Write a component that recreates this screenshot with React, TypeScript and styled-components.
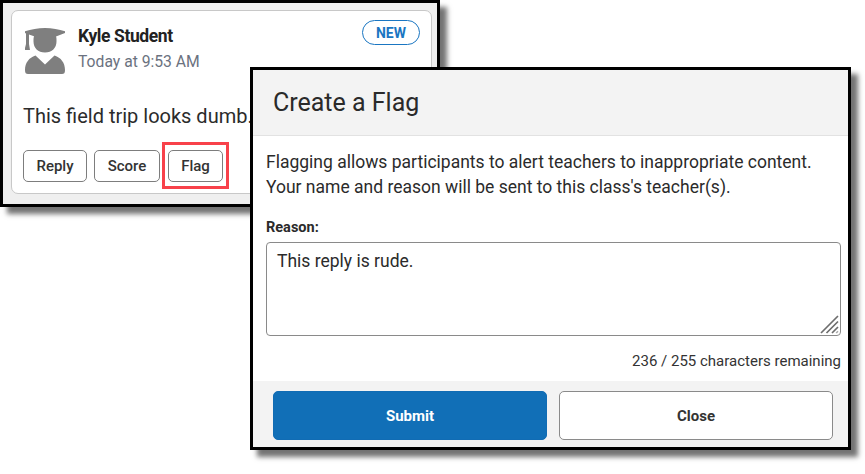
import React from "react";
import styled, { createGlobalStyle } from "styled-components";

const Global = createGlobalStyle`
  html, body { margin: 0; padding: 0; background: #fff; }
  body { font-family: Roboto, "Liberation Sans", sans-serif; }
`;

const Canvas = styled.div`
  position: relative;
  width: 865px;
  height: 474px;
  overflow: hidden;
`;

const Window = styled.div<{ $x: number; $y: number; $w: number; $h: number }>`
  position: absolute;
  left: ${(p) => p.$x}px;
  top: ${(p) => p.$y}px;
  width: ${(p) => p.$w}px;
  height: ${(p) => p.$h}px;
  box-sizing: border-box;
  border: 3px solid #000;
  box-shadow: 7px 7px 5px rgba(0, 0, 0, 0.55);
`;

const PostWindow = styled(Window)`
  background: #efefef;
  padding: 7px 5px 10px 8px;
  display: flex;
`;

const Card = styled.div`
  flex: 1;
  box-sizing: border-box;
  background: #fff;
  border: 1px solid #c8c8c8;
  border-radius: 7px;
  padding: 15px 11px 0 11px;
  display: flex;
  flex-direction: column;
  position: relative;
`;

const PostHeader = styled.div`
  display: flex;
  gap: 12px;
`;

const Avatar = styled.svg`
  width: 40px;
  height: 46px;
  flex: none;
  margin: 2px 0 0 2px;
`;

const Meta = styled.div`
  display: flex;
  flex-direction: column;
  padding-left: 1px;
`;

const Name = styled.div`
  font-size: 17.5px;
  font-weight: 700;
  letter-spacing: -0.4px;
  line-height: 20px;
  color: #222;
`;

const Time = styled.div`
  font-size: 15.7px;
  line-height: 20px;
  margin-top: 6px;
  color: #6b7280;
`;

const Badge = styled.div`
  position: absolute;
  right: 11px;
  top: 9px;
  width: 58px;
  height: 25px;
  box-sizing: border-box;
  border: 1px solid #1a76c2;
  border-radius: 13px;
  display: flex;
  align-items: center;
  justify-content: center;
  color: #1a76c2;
  font-size: 14px;
  font-weight: 700;
`;

const Body = styled.div`
  font-size: 20px;
  line-height: 24px;
  margin-top: 30px;
  color: #2b2b2b;
  white-space: nowrap;
`;

const Actions = styled.div`
  display: flex;
  gap: 7px;
  margin-top: 22px;
`;

const SmallButton = styled.div<{ $w: number }>`
  width: ${(p) => p.$w}px;
  height: 32px;
  box-sizing: border-box;
  border: 1px solid #7d7d7d;
  border-radius: 5px;
  background: #fff;
  color: #333;
  font-size: 15px;
  font-weight: 500;
  display: flex;
  align-items: center;
  justify-content: center;
`;

const FlagSlot = styled.div`
  position: relative;
  margin-left: 1px;
`;

const Highlight = styled.div`
  position: absolute;
  left: -6px;
  top: -8px;
  width: 67px;
  height: 47px;
  box-sizing: border-box;
  border: 3px solid #f8414a;
  pointer-events: none;
`;

const DialogWindow = styled(Window)`
  background: #fff;
  display: flex;
  flex-direction: column;
`;

const DialogHeader = styled.div`
  height: 66px;
  flex: none;
  box-sizing: border-box;
  background: #f3f3f3;
  border-bottom: 1px solid #e2e2e2;
  padding: 0 20px;
  display: flex;
  align-items: center;
  font-size: 25px;
  color: #2a2a2a;
`;

const DialogBody = styled.div`
  flex: 1;
  padding: 14px 7px 0 13px;
  display: flex;
  flex-direction: column;
`;

const Intro = styled.div`
  font-size: 17.5px;
  line-height: 25px;
  color: #2b2b2b;
  white-space: nowrap;
`;

const Label = styled.div`
  font-size: 14.5px;
  font-weight: 700;
  line-height: 18px;
  margin-top: 19px;
  color: #2b2b2b;
`;

const TextBox = styled.div`
  position: relative;
  height: 94px;
  box-sizing: border-box;
  margin-top: 5px;
  border: 1px solid #8a8a8a;
  border-radius: 4px;
  padding: 7px 10px;
  font-size: 17.5px;
  line-height: 22px;
  color: #2b2b2b;
`;

const Grip = styled.svg`
  position: absolute;
  right: 1px;
  bottom: 1px;
  width: 19px;
  height: 19px;
`;

const Counter = styled.div`
  text-align: right;
  font-size: 15px;
  line-height: 18px;
  margin-top: 16px;
  color: #333;
`;

const DialogFooter = styled.div`
  height: 66px;
  flex: none;
  box-sizing: border-box;
  background: #f3f3f3;
  padding: 10px 15px 0 20px;
  display: grid;
  grid-template-columns: 1fr 1fr;
  grid-auto-rows: 49px;
  column-gap: 12px;
`;

const FooterButton = styled.div<{ $primary?: boolean }>`
  box-sizing: border-box;
  border-radius: 5px;
  border: 1px solid ${(p) => (p.$primary ? "#116cb4" : "#8a8a8a")};
  background: ${(p) => (p.$primary ? "#116fb7" : "#fff")};
  color: ${(p) => (p.$primary ? "#fff" : "#333")};
  font-size: 15px;
  font-weight: 700;
  display: flex;
  align-items: center;
  justify-content: center;
`;

export default function App() {
  return (
    <Canvas>
      <Global />
      <PostWindow $x={0} $y={0} $w={440} $h={207}>
        <Card>
          <PostHeader>
            <Avatar viewBox="0 0 40 46">
              <path
                fill="#7f7f7f"
                d="M20 0 C27 .3 34 1.2 40 3.2 L40 5 L31 8.5 C31.6 10 31.5 11 31.5 13.5 C31.5 20 27 24.5 20 24.5 C13 24.5 8.5 20 8.5 13.5 C8.5 11 8.5 10 9 8.3 L4 6.6 L4 16 L5 22 L-0.5 22 L1 16 L1 5.6 L0 5 L0 3.2 C6 1.2 13 .3 20 0 Z"
              />
              <path
                fill="#7f7f7f"
                d="M10.5 27.5 L20 36.5 L29.5 27.5 C36 29.5 40 35 40 42 C40 45 39 46 37 46 L3 46 C1 46 0 45 0 42 C0 35 4 29.5 10.5 27.5 Z"
              />
            </Avatar>
            <Meta>
              <Name>Kyle Student</Name>
              <Time>Today at 9:53 AM</Time>
            </Meta>
          </PostHeader>
          <Badge>NEW</Badge>
          <Body>This field trip looks dumb.</Body>
          <Actions>
            <SmallButton $w={64}>Reply</SmallButton>
            <SmallButton $w={66}>Score</SmallButton>
            <FlagSlot>
              <SmallButton $w={55}>Flag</SmallButton>
              <Highlight />
            </FlagSlot>
          </Actions>
        </Card>
      </PostWindow>
      <DialogWindow $x={250} $y={67} $w={601} $h={383}>
        <DialogHeader>Create a Flag</DialogHeader>
        <DialogBody>
          <Intro>
            Flagging allows participants to alert teachers to inappropriate content.
            <br />
            Your name and reason will be sent to this class's teacher(s).
          </Intro>
          <Label>Reason:</Label>
          <TextBox>
            This reply is rude.
            <Grip viewBox="0 0 19 19">
              <path
                d="M1 18 L18 1 M6.5 18 L18 6.5 M12 18 L18 12"
                stroke="#6e6e6e"
                strokeWidth="1.7"
                fill="none"
              />
              <path d="M16.2 18 L18 16.2" stroke="#aaa" strokeWidth="1.5" fill="none" />
            </Grip>
          </TextBox>
          <Counter>236 / 255 characters remaining</Counter>
        </DialogBody>
        <DialogFooter>
          <FooterButton $primary>Submit</FooterButton>
          <FooterButton>Close</FooterButton>
        </DialogFooter>
      </DialogWindow>
    </Canvas>
  );
}
